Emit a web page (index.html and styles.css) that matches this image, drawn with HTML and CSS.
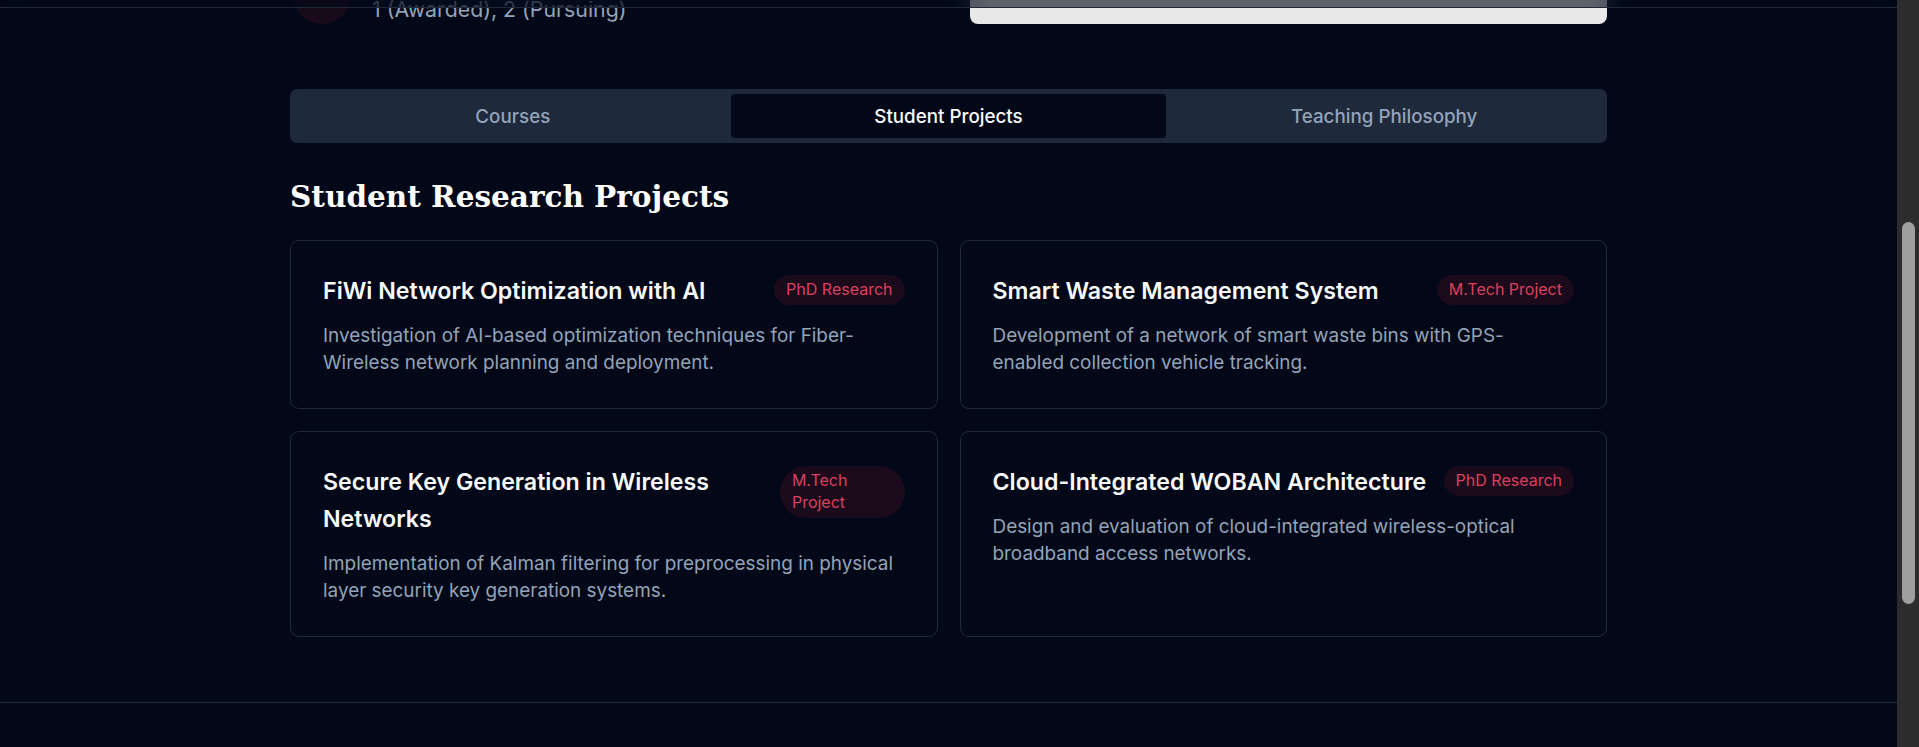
FILE: index.html
```html
<!DOCTYPE html>
<html lang="en">
<head>
<meta charset="utf-8">
<title>Teaching - Student Projects</title>
<link rel="stylesheet" href="styles.css">
</head>
<body>
<div class="viewport">
  <div class="page">
    <header class="topbar"></header>
    <main class="container">
      <div class="peek">
        <div class="peek-inner">
          <div class="stat">
            <div class="stat-icon"></div>
            <p class="stat-value">1 (Awarded), 2 (Pursuing)</p>
          </div>
          <div class="photo-card"></div>
        </div>
      </div>

      <nav class="tabs">
        <button class="tab">Courses</button>
        <button class="tab active">Student Projects</button>
        <button class="tab">Teaching Philosophy</button>
      </nav>

      <h2 class="section-title">Student Research Projects</h2>

      <div class="project-grid">
        <article class="project-card">
          <div class="project-head">
            <h3>FiWi Network Optimization with AI</h3>
            <span class="badge">PhD Research</span>
          </div>
          <p>Investigation of AI-based optimization techniques for Fiber-Wireless network planning and deployment.</p>
        </article>
        <article class="project-card">
          <div class="project-head">
            <h3>Smart Waste Management System</h3>
            <span class="badge">M.Tech Project</span>
          </div>
          <p>Development of a network of smart waste bins with GPS-enabled collection vehicle tracking.</p>
        </article>
        <article class="project-card">
          <div class="project-head">
            <h3>Secure Key Generation in Wireless Networks</h3>
            <span class="badge">M.Tech Project</span>
          </div>
          <p>Implementation of Kalman filtering for preprocessing in physical layer security key generation systems.</p>
        </article>
        <article class="project-card">
          <div class="project-head">
            <h3>Cloud-Integrated WOBAN Architecture</h3>
            <span class="badge">PhD Research</span>
          </div>
          <p>Design and evaluation of cloud-integrated wireless-optical broadband access networks.</p>
        </article>
      </div>
    </main>
    <footer class="site-footer"></footer>
  </div>
  <div class="scrollbar"><div class="thumb"></div></div>
</div>
</body>
</html>
```

FILE: styles.css
```css
* {
  box-sizing: border-box;
  margin: 0;
  padding: 0;
}

html, body {
  height: 100%;
}

body {
  background: #020817;
  color: #f8fafc;
  font-family: Inter, "Noto Sans", sans-serif;
  overflow: hidden;
}

.viewport {
  display: flex;
  height: 747px;
}

.page {
  flex: 1;
  min-width: 0;
  position: relative;
  overflow: hidden;
}

.topbar {
  position: absolute;
  top: 0;
  left: 0;
  right: 0;
  height: 8px;
  background: rgba(2, 8, 23, 0.6);
  backdrop-filter: blur(12px);
  -webkit-backdrop-filter: blur(12px);
  border-bottom: 1px solid #1e293b;
  z-index: 10;
}

.container {
  width: 1317px;
  margin: 0 auto;
  padding-bottom: 65px;
}

/* bottom edge of the stats block, scrolled mostly out of view */
.peek {
  height: 24px;
  overflow: hidden;
}

.peek-inner {
  height: 120px;
  margin-top: -96px;
  display: grid;
  grid-template-columns: 1fr 637px;
  align-items: end;
}

.stat {
  display: flex;
  align-items: flex-end;
  gap: 21px;
  padding-left: 3px;
}

.stat-icon {
  width: 58px;
  height: 58px;
  border-radius: 50%;
  background: rgba(225, 29, 72, 0.1);
  flex-shrink: 0;
}

.stat-value {
  font-size: 21.3px;
  line-height: 28px;
  color: #94a3b8;
  margin-bottom: 1px;
}

.photo-card {
  height: 110px;
  background: #e8e8e8;
  border-radius: 8px;
}

/* tabs */
.tabs {
  margin-top: 65px;
  display: grid;
  grid-template-columns: repeat(3, 1fr);
  padding: 5px;
  background: #1e293b;
  border-radius: 7px;
}

.tab {
  height: 44px;
  padding-top: 2px;
  border: 0;
  background: transparent;
  font-family: Inter, "Noto Sans", sans-serif;
  font-weight: 500;
  font-size: 18.8px;
  line-height: 1;
  color: #94a3b8;
  border-radius: 4px;
  cursor: pointer;
}

.tab.active {
  background: #020817;
  color: #f8fafc;
}

.section-title {
  margin-top: 36px;
  margin-bottom: 25px;
  font-family: "DejaVu Serif", "Liberation Serif", serif;
  font-weight: 700;
  font-size: 29.5px;
  line-height: 36px;
  color: #ffffff;
}

.project-grid {
  display: grid;
  grid-template-columns: 1fr 1fr;
  gap: 22px;
}

.project-card {
  border: 1px solid #1e293b;
  border-radius: 9px;
  padding: 32px;
  background: #020817;
}

.project-head {
  display: flex;
  justify-content: space-between;
  align-items: flex-start;
  gap: 12px;
  margin-bottom: 12px;
}

.project-head h3 {
  font-size: 23.2px;
  line-height: 37px;
  font-weight: 600;
  color: #f8fafc;
}

.badge {
  margin-top: 2px;
  padding: 4.25px 12px;
  border-radius: 999px;
  background: rgba(225, 29, 72, 0.11);
  color: #dc405e;
  font-size: 16px;
  line-height: 21.5px;
}

.project-card p {
  font-size: 18.9px;
  line-height: 27px;
  color: #94a3b8;
}

.site-footer {
  border-top: 1px solid #1e293b;
  height: 60px;
}

/* window scrollbar */
.scrollbar {
  width: 22px;
  flex-shrink: 0;
  background: #2c2c2c;
  padding-top: 222px;
  padding-left: 5px;
}

.thumb {
  width: 13px;
  height: 382px;
  border-radius: 7px;
  background: #9f9f9f;
}
```
